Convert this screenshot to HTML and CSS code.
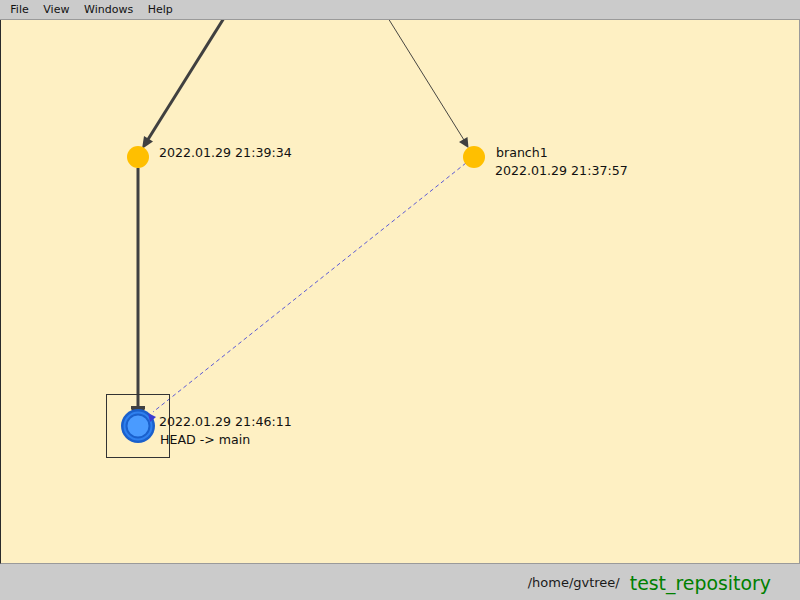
FILE: index.html
```html
<!DOCTYPE html>
<html>
<head>
<meta charset="utf-8">
<link rel="stylesheet" href="styles.css">
</head>
<body>
<div class="app">
  <div class="menubar">
    <span class="menu-item">File</span>
    <span class="menu-item">View</span>
    <span class="menu-item">Windows</span>
    <span class="menu-item">Help</span>
  </div>
  <div class="canvas">
    <svg class="graph" viewBox="1 20 798 543" preserveAspectRatio="none" xmlns="http://www.w3.org/2000/svg">
      <!-- edges -->
      <line x1="224" y1="18" x2="147" y2="141" stroke="#404040" stroke-width="3"/>
      <polygon points="142,149 153,141.5 144,136" fill="#404040"/>
      <line x1="388" y1="18" x2="464" y2="140" stroke="#333" stroke-width="0.9"/>
      <polygon points="468.5,148 467.5,137 459,142" fill="#404040"/>
      <line x1="138" y1="168" x2="138" y2="408" stroke="#404040" stroke-width="3"/>
      <polygon points="131,406 145,406 145,409 138,418 131,409" fill="#404040"/>
      <line x1="466" y1="163" x2="153" y2="412" stroke="#4a4ad6" stroke-width="0.9" stroke-dasharray="4 3"/>
      <!-- selection box -->
      <rect x="106.5" y="394.5" width="63" height="63" fill="none" stroke="#333" stroke-width="1"/>
      <!-- nodes -->
      <circle cx="138" cy="157" r="11" fill="#ffbf00"/>
      <circle cx="474" cy="157" r="11" fill="#ffbf00"/>
      <circle cx="138" cy="426" r="17" fill="#1a60cc"/>
      <circle cx="138" cy="426" r="14.5" fill="#2f80ee"/>
      <circle cx="138" cy="426" r="11.5" fill="#4a9bff" stroke="#1a60cc" stroke-width="2"/>
      <polygon points="148,413 156,417 150,422" fill="#3d3dd0"/>
      <!-- labels -->
      <text class="label" x="159" y="157">2022.01.29 21:39:34</text>
      <text class="label" x="496" y="157">branch1</text>
      <text class="label" x="495" y="175">2022.01.29 21:37:57</text>
      <text class="label" x="159" y="426">2022.01.29 21:46:11</text>
      <text class="label" x="160" y="444">HEAD -&gt; main</text>
    </svg>
  </div>
  <div class="statusbar">
    <span class="path">/home/gvtree/</span>
    <span class="repo">test_repository</span>
  </div>
</div>
</body>
</html>
```
FILE: styles.css
```css
html, body {
  margin: 0;
  padding: 0;
}
body {
  font-family: "DejaVu Sans", "Liberation Sans", sans-serif;
  background: #cbcbcb;
}
.app {
  width: 800px;
  height: 600px;
  display: flex;
  flex-direction: column;
}
.menubar {
  height: 19px;
  border-bottom: 1px solid #9a9a9a;
  background: #cbcbcb;
  display: flex;
  align-items: center;
  padding-left: 3px;
  font-size: 11px;
  color: #111;
}
.menu-item {
  padding: 0 7.3px;
  line-height: 19px;
}
.canvas {
  flex: 1;
  background: #fef0c3;
  border-left: 1px solid #2a2a2a;
  border-right: 1px solid #9a9a9a;
  border-bottom: 1px solid #9a9a9a;
  min-height: 0;
}
.graph {
  display: block;
  width: 100%;
  height: 100%;
}
.label {
  font-family: "DejaVu Sans", sans-serif;
  font-size: 12.6px;
  fill: #111;
}
.statusbar {
  height: 36px;
  display: flex;
  justify-content: flex-end;
  align-items: center;
  padding-right: 29px;
  gap: 10px;
  background: #cbcbcb;
}
.path {
  font-size: 13px;
  color: #1a1a1a;
}
.repo {
  font-size: 18.9px;
  color: #008000;
  position: relative;
  top: 1px;
}
```
